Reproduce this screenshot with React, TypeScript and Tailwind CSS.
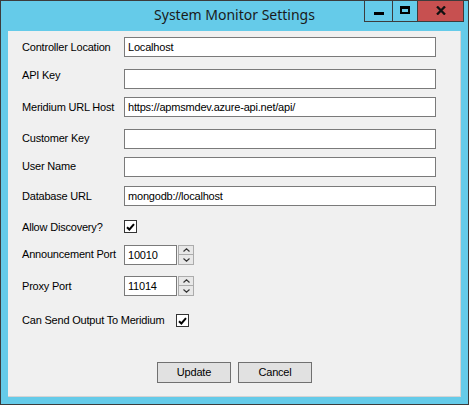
import React from 'react'

const font = { fontFamily: '"Liberation Sans", Arial, sans-serif' }
const txt = 'text-[11px] leading-none tracking-[-0.2px] text-black'

function TextBox({ value = '' }: { value?: string }) {
  return (
    <div className={`flex h-[20px] w-[312px] items-center border border-[#7a7a7a] bg-white pl-[3px] ${txt}`}>
      {value}
    </div>
  )
}

function Check() {
  return (
    <div className="flex h-[13px] w-[13px] items-center justify-center border border-[#333333] bg-white">
      <svg width="9" height="8" viewBox="0 0 9 8">
        <path d="M1 4.2 L3.4 6.5 L8 1.2" fill="none" stroke="#000" strokeWidth="2" />
      </svg>
    </div>
  )
}

function Spinner({ value }: { value: string }) {
  return (
    <div className="flex h-[20px] w-[70px]">
      <div className={`flex h-full w-[53px] items-center border border-[#7a7a7a] bg-white pl-[3px] ${txt}`}>
        {value}
      </div>
      <div className="ml-[1px] flex w-[16px] flex-col">
        <div className="flex h-[10px] items-center justify-center border border-[#acacac] bg-[#e8e8e8]">
          <svg width="7" height="4" viewBox="0 0 7 4">
            <path d="M0.5 3.5 L3.5 0.8 L6.5 3.5" fill="none" stroke="#333" strokeWidth="1.2" />
          </svg>
        </div>
        <div className="flex h-[10px] items-center justify-center border border-t-0 border-[#acacac] bg-[#e8e8e8]">
          <svg width="7" height="4" viewBox="0 0 7 4">
            <path d="M0.5 0.5 L3.5 3.2 L6.5 0.5" fill="none" stroke="#333" strokeWidth="1.2" />
          </svg>
        </div>
      </div>
    </div>
  )
}

function Row({ label, children, className = '', labelClass = '' }: { label: string; children: React.ReactNode; className?: string; labelClass?: string }) {
  return (
    <div className={`flex items-center ${className}`}>
      <span className={`w-[102px] shrink-0 ${txt} ${labelClass}`}>{label}</span>
      {children}
    </div>
  )
}

export default function App() {
  return (
    <div className="flex h-[405px] w-[469px] flex-col border border-[#3c3c3c] bg-[#65cbe9]" style={font}>
      {/* Title bar */}
      <div className="grid h-[30px] shrink-0 grid-cols-[1fr_auto_1fr]">
        <div />
        <div
          className="pt-[5px] text-[14px] leading-[18px] text-[#1a1a1a]"
          style={{ fontFamily: '"Noto Sans", "Open Sans", sans-serif' }}
        >
          System Monitor Settings
        </div>
        <div className="flex justify-end pr-[4px]">
          <div className="-mt-px flex h-[22px] border border-[#3c3c3c]">
            <div className="flex w-[28px] items-center justify-center border-r border-[#3c3c3c]">
              <div className="mt-[5px] h-[3px] w-[10px] bg-black" />
            </div>
            <div className="flex w-[25px] items-center justify-center border-r border-[#3c3c3c]">
              <div className="-mt-[2px] h-[8px] w-[10px] border-2 border-t-[3px] border-black" />
            </div>
            <div className="flex w-[45px] items-center justify-center bg-[#c75050]">
              <svg width="10" height="9" viewBox="0 0 10 9" className="-mt-[2px]">
                <path d="M1 0.5 L9 8.5 M9 0.5 L1 8.5" stroke="#111" strokeWidth="2.3" />
              </svg>
            </div>
          </div>
        </div>
      </div>

      {/* Client area */}
      <div className="mx-[7px] flex h-[366px] flex-col border-r border-b border-[#d4d4d4] bg-[#f0f0f0] pl-[14px]">
        <Row label="Controller Location" className="mt-[6px]">
          <TextBox value="Localhost" />
        </Row>
        <Row label="API Key" className="mt-[12px]" labelClass="-mt-[7px]">
          <TextBox />
        </Row>
        <Row label="Meridium URL Host" className="mt-[8px]">
          <TextBox value="https://apmsmdev.azure-api.net/api/" />
        </Row>
        <Row label="Customer Key" className="mt-[12px]" labelClass="-mt-[2px]">
          <TextBox />
        </Row>
        <Row label="User Name" className="mt-[8px]" labelClass="-mt-[2px]">
          <TextBox />
        </Row>
        <Row label="Database URL" className="mt-[9px]">
          <TextBox value="mongodb://localhost" />
        </Row>
        <Row label="Allow Discovery?" className="mt-[14px]" labelClass="mt-[1px]">
          <Check />
        </Row>
        <Row label="Announcement Port" className="mt-[12px]" labelClass="-mt-[2px]">
          <Spinner value="10010" />
        </Row>
        <Row label="Proxy Port" className="mt-[11px]">
          <Spinner value="11014" />
        </Row>
        <div className="mt-[18px] flex items-center">
          <span className={`w-[154px] shrink-0 ${txt}`}>Can Send Output To Meridium</span>
          <Check />
        </div>
        <div className="mt-[35px] flex justify-center gap-[7px] pr-[13px]">
          <button type="button" className={`h-[21px] w-[74px] border border-[#707070] bg-[#e1e1e1] ${txt}`}>
            Update
          </button>
          <button type="button" className={`h-[21px] w-[74px] border border-[#707070] bg-[#e1e1e1] ${txt}`}>
            Cancel
          </button>
        </div>
      </div>
    </div>
  )
}
